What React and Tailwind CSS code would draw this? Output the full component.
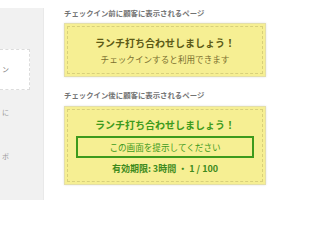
const JP = { fontFamily: '"Noto Sans CJK JP", "Noto Sans", sans-serif' };

function Coupon({ children, className = "" }) {
  return (
    <div className={`border border-[#e4dfa8] bg-[#f6ef93] p-[2px] shadow-[0_0_2px_rgba(0,0,0,0.12)] ${className}`}>
      <div className="h-full border-[1.5px] border-dashed border-[#d8d07c] flex flex-col items-center">
        {children}
      </div>
    </div>
  );
}

export default function App() {
  return (
    <div className="w-[300px] h-[200px] bg-white flex overflow-hidden" style={JP}>
      {/* sidebar (cut off) */}
      <aside className="w-[44px] mt-[8px] bg-[#f1f1f1] border-r border-[#e9e9e9] flex flex-col">
        <div className="mt-[41px] w-[30px] h-[41px] bg-white border border-dashed border-[#dcdcdc] border-l-0 flex items-center">
          <span className="ml-[2px] text-[7px] text-[#888]">ン</span>
        </div>
        <span className="mt-[19px] ml-[2px] text-[7px] text-[#999] leading-none">に</span>
        <span className="mt-[37px] ml-[2px] text-[7px] text-[#999] leading-none">ポ</span>
      </aside>

      {/* main */}
      <main className="flex-1 pl-[20px] pt-[9px]">
        <p className="text-[7.4px] font-bold text-[#737373] leading-[8px]">チェックイン前に顧客に表示されるページ</p>
        <Coupon className="mt-[6px] w-[202px] h-[54px]">
          <p className="mt-[10px] text-[10px] font-bold text-[#5c5a16] leading-[12px]">ランチ打ち合わせしましょう！</p>
          <p className="mt-[5px] text-[8.6px] text-[#7b7030] leading-[11px]">チェックインすると利用できます</p>
        </Coupon>

        <p className="mt-[14px] text-[7.4px] font-bold text-[#737373] leading-[8px]">チェックイン後に顧客に表示されるページ</p>
        <Coupon className="mt-[7px] w-[202px] h-[79px]">
          <p className="mt-[9px] text-[10px] font-bold text-[#3d9a1c] leading-[12px]">ランチ打ち合わせしましょう！</p>
          <div className="mt-[5px] w-[178px] h-[22px] border-2 border-[#3d9a1c] flex items-center justify-center">
            <span className="text-[8.6px] text-[#3d9a1c] leading-none">この画面を提示してください</span>
          </div>
          <p className="mt-[5px] text-[9px] font-bold text-[#3d8a1c] leading-[11px]">有効期限: 3時間 ・ 1 / 100</p>
        </Coupon>
      </main>
    </div>
  );
}
